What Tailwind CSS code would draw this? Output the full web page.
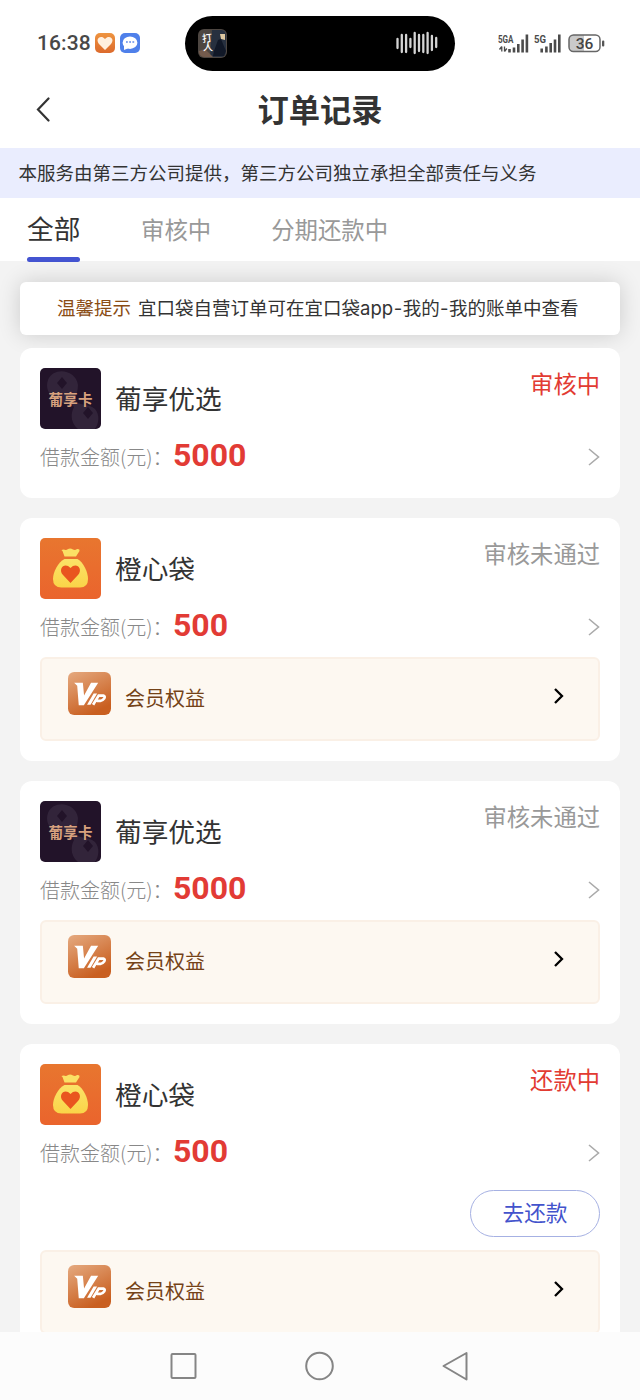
<!DOCTYPE html>
<html lang="zh-CN">
<head>
<meta charset="utf-8">
<title>订单记录</title>
<script src="https://cdn.jsdelivr.net/npm/@tailwindcss/browser@4"></script>
</head>
<body class="bg-[#f3f3f3] font-['Noto_Sans_CJK_SC',sans-serif] text-[#333]">
<svg class="absolute size-0">
  <defs>
    <linearGradient id="gVip" x1="0" y1="0" x2=".5" y2="1"><stop offset="0" stop-color="#e5aa80"/><stop offset="1" stop-color="#c95f20"/></linearGradient>
    <linearGradient id="gOr" x1="0" y1="0" x2="0" y2="1"><stop offset="0" stop-color="#e8762f"/><stop offset="1" stop-color="#ea642d"/></linearGradient>
    <linearGradient id="gBag" x1="0" y1="0" x2="0" y2="1"><stop offset="0" stop-color="#fbe268"/><stop offset="1" stop-color="#fad448"/></linearGradient>
    <linearGradient id="gHeart" x1="0" y1="0" x2="0" y2="1"><stop offset="0" stop-color="#ee9440"/><stop offset="1" stop-color="#dc6a2c"/></linearGradient>
  </defs>
  <symbol id="grape" viewBox="0 0 61 61">
    <rect width="61" height="61" rx="5" fill="#221329"/>
    <path d="M8 12C14-2 36 2 38 17c0 7-3 11-2 16 3 5 13 2 19 8 5 6 4 14 0 20H38c-7-6-8-14-4-22-4-6-8-1-15-6C9 29 5 20 8 12z" fill="#32243a"/>
    <path d="M22 9l5 6-5 6-5-6zM48 39l5 6-5 6-5-6z" fill="#221329"/>
    <g fill="#d7a17e" font-family="Noto Sans CJK SC" font-size="14.500" font-weight="700"><text x="8.500" y="36.500">葡</text><text x="23.300" y="36.500">享</text><text x="38" y="36.500">卡</text></g>
  </symbol>
  <symbol id="bag" viewBox="0 0 61 61">
    <rect width="61" height="61" rx="5" fill="url(#gOr)"/>
    <path d="M22.500 13q-2.500-1.500 1-1.500 3 1 4.500-.5 2.500-1 5 .5 2 1 4-.5 3-.5 2.500 2l-3.500 5.500H24.500z" fill="#fbe065"/>
    <path d="M24.500 21h13c6 3.500 10.500 13 10.500 20q0 8.500-8 8.500H21.500q-8.500 0-8.500-8.500c0-7 5-16.500 11.500-20z" fill="url(#gBag)"/>
    <path d="M30.500 45 22.800 36.800C17.500 30.500 25 23.500 30.500 30 36 23.500 43.500 30.500 38.200 36.800z" fill="#e9551f"/>
  </symbol>
  <symbol id="vip" viewBox="0 0 42 42">
    <rect width="42" height="42" rx="6" fill="url(#gVip)"/>
    <path d="M6 10.500h8.500l1.200 12.500 6.800-12.500h7L15.500 32.500H10.500L9 13.500z" fill="#fff"/>
    <path d="M25 21h3.400L22 32h-3.400z" fill="#fff"/>
    <path d="M24.500 32l5.500-9h4.500q2.200.5.800 3-1.500 2.200-3.500 2.200h-3.600" fill="none" stroke="#fff" stroke-width="2.600"/>
  </symbol>
  <symbol id="next" viewBox="0 0 12 18"><path d="M1 1l9.500 8L1 17" fill="none" stroke="#aaa" stroke-width="1.600"/></symbol>
  <symbol id="next2" viewBox="0 0 12 18"><path d="M2 2l7 7-7 7" fill="none" stroke="#000" stroke-width="2.300"/></symbol>
</svg>

<div class="flex h-[1400px] w-[640px] flex-col overflow-hidden">
  <div class="flex h-[86px] shrink-0 items-center bg-white pl-[37px]">
    <div class="w-[58px] font-[Roboto,sans-serif] text-[21px] leading-none font-medium tracking-[0.1px] text-[#484848]">16:38</div>
    <svg class="size-5" viewBox="0 0 20 20"><rect width="20" height="20" rx="5" fill="url(#gHeart)"/><path d="M10 17 4 11C-.5 5 6.500 1.500 10 6c3.500-4.500 10.500-1 6 5z" fill="#fff0df"/></svg>
    <svg class="ml-[5px] size-5" viewBox="0 0 20 20"><rect width="20" height="20" rx="5" fill="#4f80ea"/><ellipse cx="10" cy="9.700" rx="7.400" ry="6.200" fill="#fff"/><path d="M4 12v5l5-2z" fill="#fff"/><path d="M6 9h1.800M9.200 9H11M12.400 9h1.800" stroke="#5f8bea" stroke-width="1.500"/></svg>
    <div class="ml-[45px] flex h-[55px] w-[270px] items-center rounded-full bg-black pr-4 pl-[13px]">
      <svg class="h-[29px] w-[29px]" viewBox="0 0 29 29"><rect width="29" height="29" rx="6" fill="#4d4641"/><path d="M14 1h9q5 0 5 6v15q0 6-5 6H12z" fill="#27303f"/><path d="M22 5h5v6l-4-1z" fill="#ddc7a0"/><path d="M16 22l4-11 3-1 2 5 3 7-2 5H15z" fill="#111827"/><path d="M1 22l6-2 8 8H7q-6 0-6-6z" fill="#745b4d"/><g fill="#fff" font-family="Noto Sans CJK SC" font-weight="500"><text x="4" y="13" font-size="10" transform="rotate(-6 7 9)">打</text><text x="5" y="22" font-size="10">人</text></g></svg>
      <svg class="ml-auto h-6 w-[43px]" viewBox="0 0 43 24"><path d="M1.500 8v9M5.800 4v17M10.100 4v17M14.400 8v8M18.700 2v20M23 4v16M27.300 4v17M31.600 2v20M35.900 5v14M40.200 7v9" stroke="#d4d4d4" stroke-width="2.300" stroke-linecap="round"/></svg>
    </div>
    <svg class="ml-[43px] h-6 w-[108px] font-[Roboto,sans-serif]" viewBox="0 0 108 24">
      <g fill="#4b4b4b" font-weight="700" font-size="11.500"><text x="0" y="12" textLength="15.500" lengthAdjust="spacingAndGlyphs">5GA</text><text x="36" y="12" textLength="12" lengthAdjust="spacingAndGlyphs">5G</text></g>
      <path d="M11.500 17.500V21M16 16v5M20.300 12.500V21M24.600 8v13M28.900 3v18M43.700 17v4M48.400 15v6M52.700 11.500V21M57 8v13M61.300 3v18" transform="translate(0 .5)" stroke="#4b4b4b" stroke-width="2.600"/>
      <path d="M3.800 15.500v5M6.500 15.500v5M1.500 18.500l2.300-3M8.800 17.500l-2.300 3" stroke="#4b4b4b" stroke-width="1.300"/>
      <path d="M86 4v16H76q-5 0-5-5V9q0-5 5-5z" fill="#cacaca"/><rect x="71" y="4" width="31" height="16.500" rx="4.500" fill="none" stroke="#666" stroke-width="1.500"/><rect x="104" y="9.500" width="2.300" height="6" rx="1" fill="#555"/>
      <text x="86.500" y="17.800" text-anchor="middle" font-size="15.500" font-weight="500" fill="#444">36</text>
    </svg>
  </div>
  <header class="grid h-[62px] shrink-0 grid-cols-3 items-center bg-white pb-[16px]">
    <svg class="ml-9 h-[26px] w-[15px]" viewBox="0 0 15 26"><path d="M12.500 2.500 2 13.500l10.500 11" fill="none" stroke="#333" stroke-width="2.200" stroke-linecap="round"/></svg>
    <h1 class="text-center text-[31.300px] leading-[46px] font-bold whitespace-nowrap">订单记录</h1>
  </header>
  <div class="h-[50px] shrink-0 bg-[#eaedfe] pl-[18.500px] text-[18.500px] leading-[49px] whitespace-nowrap">本服务由第三方公司提供，第三方公司独立承担全部责任与义务</div>
  <nav class="flex h-[63px] shrink-0 bg-white pl-[27px] text-[23.400px] leading-[62px] text-[#999]">
    <div class="flex w-[53px] flex-col text-[26.700px] leading-[59px] text-[#333]"><span class="whitespace-nowrap">全部</span><i class="h-[5px] shrink-0 rounded-full bg-[#4454d1]"></i></div>
    <span class="ml-[61px]">审核中</span>
    <span class="ml-[60px]">分期还款中</span>
  </nav>
  <main class="min-h-0 grow overflow-hidden px-5 pt-[21px]">
    <div class="h-[53px] rounded-md bg-white pl-[37px] text-[18.500px] leading-[51px] whitespace-nowrap shadow-[0_0_22px_rgba(0,0,0,0.16)]"><span class="mr-[7px] text-[#8a4c14]">温馨提示</span>宜口袋自营订单可在宜口袋<span class="font-[Inter]">app</span><span class="px-[0.600px] font-[Inter]">-</span>我的<span class="px-[0.300px] font-[Inter]">-</span>我的账单中查看</div>

    <section class="mt-[13px] h-[150px] rounded-xl bg-white px-5 pt-5">
      <div class="flex">
        <svg class="size-[61px]"><use href="#grape"/></svg>
        <h2 class="ml-[14px] text-[26.700px] leading-[59px]">葡享优选</h2>
        <span class="ml-auto text-[23.300px] leading-[31px] text-[#e23b32]">审核中</span>
      </div>
      <div class="mt-[7px] flex h-[41px] items-center"><span class="w-[133px] text-xl font-light whitespace-nowrap text-[#888]">借款金额(元)：</span><b class="pb-1 font-[Roboto] text-[32px] leading-none text-[#e23b35]">5000</b><svg class="ml-auto h-[18px] w-3"><use href="#next"/></svg></div>
    </section>

    <section class="mt-5 h-[243px] rounded-xl bg-white px-5 pt-5">
      <div class="flex">
        <svg class="size-[61px]"><use href="#bag"/></svg>
        <h2 class="ml-[14px] text-[26.700px] leading-[59px]">橙心袋</h2>
        <span class="ml-auto text-[23.300px] leading-[31px] text-[#999]">审核未通过</span>
      </div>
      <div class="mt-[7px] flex h-[41px] items-center"><span class="w-[133px] text-xl font-light whitespace-nowrap text-[#888]">借款金额(元)：</span><b class="pb-1 font-[Roboto] text-[32px] leading-none text-[#e23b35]">500</b><svg class="ml-auto h-[18px] w-3"><use href="#next"/></svg></div>
      <div class="mt-[10px] flex h-[84px] items-center rounded-md border-2 border-[#faf0e6] bg-[#fdf8f1] pr-[33px] pb-[7px] pl-[26px]"><svg class="-mt-1 size-[43px]"><use href="#vip"/></svg><span class="mt-1 ml-[14px] text-xl text-[#744217]">会员权益</span><svg class="ml-auto h-[18px] w-3"><use href="#next2"/></svg></div>
    </section>

    <section class="mt-5 h-[243px] rounded-xl bg-white px-5 pt-5">
      <div class="flex">
        <svg class="size-[61px]"><use href="#grape"/></svg>
        <h2 class="ml-[14px] text-[26.700px] leading-[59px]">葡享优选</h2>
        <span class="ml-auto text-[23.300px] leading-[31px] text-[#999]">审核未通过</span>
      </div>
      <div class="mt-[7px] flex h-[41px] items-center"><span class="w-[133px] text-xl font-light whitespace-nowrap text-[#888]">借款金额(元)：</span><b class="pb-1 font-[Roboto] text-[32px] leading-none text-[#e23b35]">5000</b><svg class="ml-auto h-[18px] w-3"><use href="#next"/></svg></div>
      <div class="mt-[10px] flex h-[84px] items-center rounded-md border-2 border-[#faf0e6] bg-[#fdf8f1] pr-[33px] pb-[7px] pl-[26px]"><svg class="-mt-1 size-[43px]"><use href="#vip"/></svg><span class="mt-1 ml-[14px] text-xl text-[#744217]">会员权益</span><svg class="ml-auto h-[18px] w-3"><use href="#next2"/></svg></div>
    </section>

    <section class="mt-5 h-[308px] rounded-xl bg-white px-5 pt-5">
      <div class="flex">
        <svg class="size-[61px]"><use href="#bag"/></svg>
        <h2 class="ml-[14px] text-[26.700px] leading-[59px]">橙心袋</h2>
        <span class="ml-auto text-[23.300px] leading-[31px] text-[#e23b32]">还款中</span>
      </div>
      <div class="mt-[7px] flex h-[41px] items-center"><span class="w-[133px] text-xl font-light whitespace-nowrap text-[#888]">借款金额(元)：</span><b class="pb-1 font-[Roboto] text-[32px] leading-none text-[#e23b35]">500</b><svg class="ml-auto h-[18px] w-3"><use href="#next"/></svg></div>
      <button class="mt-[17px] ml-auto block h-[47px] w-[130px] rounded-full border-[1.500px] border-[#a6b1e3] pb-[3px] text-[21.700px] leading-[40px] text-[#4353cc]">去还款</button>
      <div class="mt-[13px] flex h-[84px] items-center rounded-md border-2 border-[#faf0e6] bg-[#fdf8f1] pr-[33px] pb-[7px] pl-[26px]"><svg class="-mt-1 size-[43px]"><use href="#vip"/></svg><span class="mt-1 ml-[14px] text-xl text-[#744217]">会员权益</span><svg class="ml-auto h-[18px] w-3"><use href="#next2"/></svg></div>
    </section>
  </main>
  <footer class="h-[68px] shrink-0 bg-[#fcfcfc]">
    <svg class="h-[68px] w-[640px]" viewBox="0 0 640 68" fill="none" stroke="#858585" stroke-width="2" stroke-linejoin="round"><rect x="171.500" y="22" width="24" height="24" rx="1"/><circle cx="319.500" cy="34" r="13.300"/><path d="M443.500 34 466.500 21v26.500z"/></svg>
  </footer>
</div>
</body>
</html>
